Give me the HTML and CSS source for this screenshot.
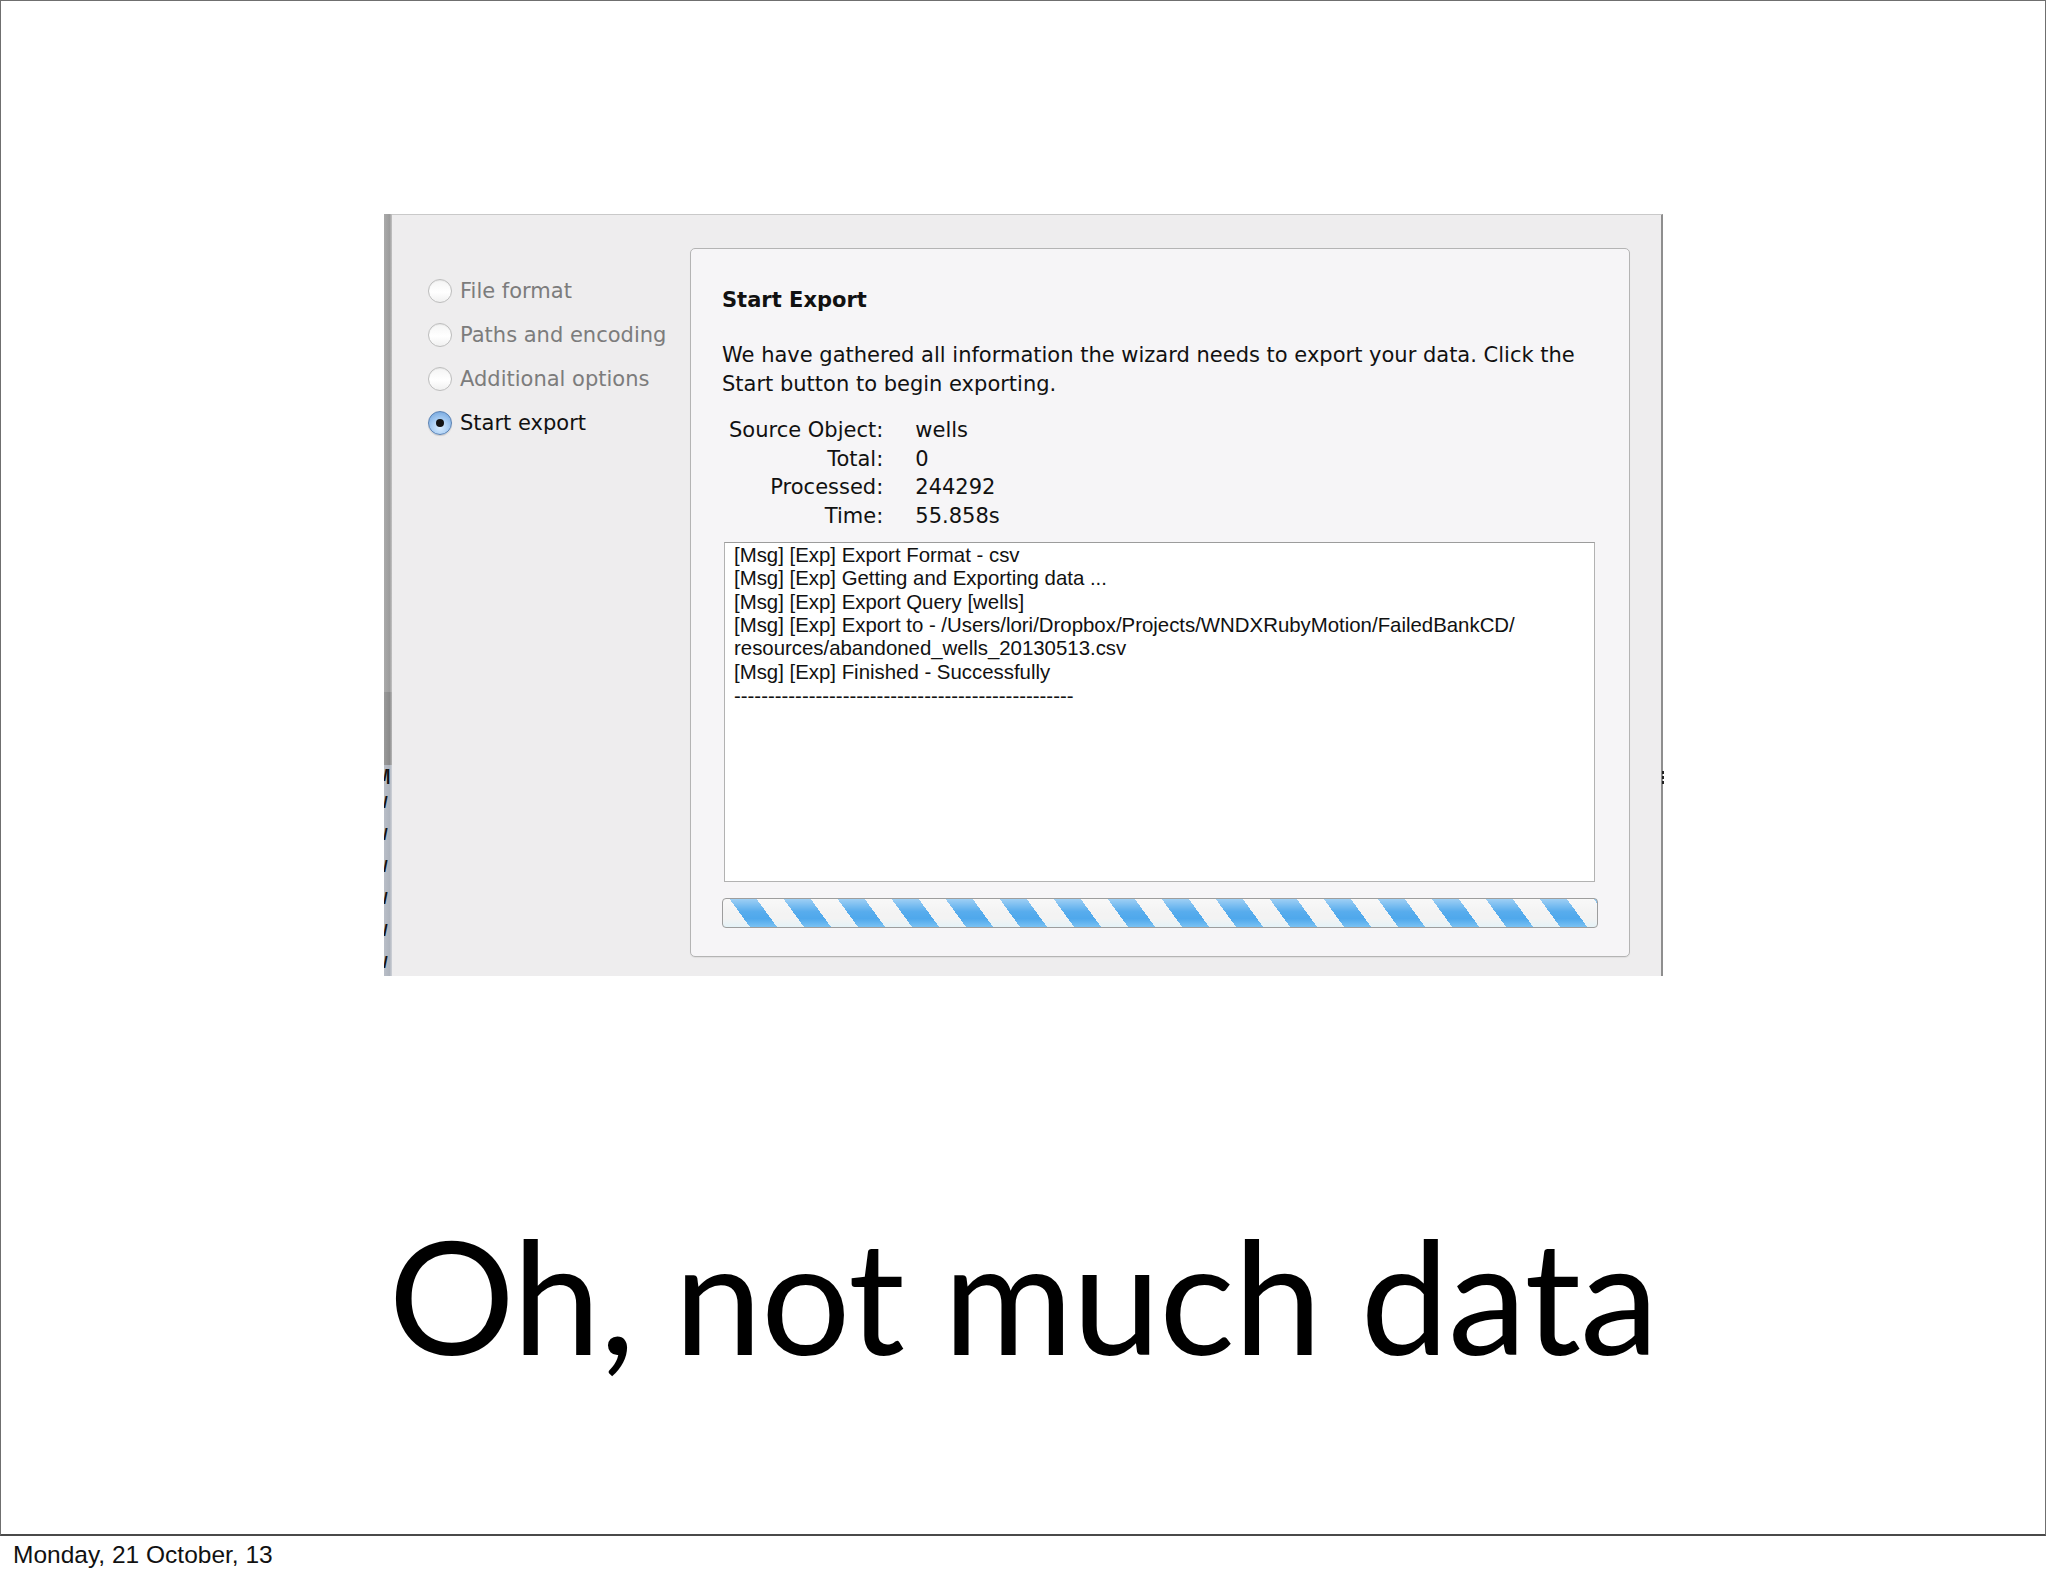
FILE: index.html
```html
<!DOCTYPE html>
<html>
<head>
<meta charset="utf-8">
<title>Oh, not much data</title>
<link rel="stylesheet" href="styles.css">
</head>
<body>
<div class="slide">
  <div class="shot">
    <div class="frame-left">
      <div class="fl-top"></div>
      <div class="fl-mid"></div>
      <div class="fl-bottom">
        <span class="sl first">/|</span>
        <span class="sl">/</span>
        <span class="sl">/</span>
        <span class="sl">/</span>
        <span class="sl">/</span>
        <span class="sl">/</span>
        <span class="sl">/</span>
      </div>
    </div>
    <div class="win">
      <div class="steps">
        <div class="step off"><span class="radio"></span><span class="lbl">File format</span></div>
        <div class="step off"><span class="radio"></span><span class="lbl">Paths and encoding</span></div>
        <div class="step off"><span class="radio"></span><span class="lbl">Additional options</span></div>
        <div class="step on"><span class="radio sel"><span class="dot"></span></span><span class="lbl">Start export</span></div>
      </div>
      <div class="panel">
        <h2 class="heading">Start Export</h2>
        <p class="intro">We have gathered all information the wizard needs to export your data. Click the<br>Start button to begin exporting.</p>
        <div class="info">
          <span class="k">Source Object:</span><span class="v">wells</span>
          <span class="k">Total:</span><span class="v">0</span>
          <span class="k">Processed:</span><span class="v">244292</span>
          <span class="k">Time:</span><span class="v">55.858s</span>
        </div>
        <div class="log">
          <div>[Msg] [Exp] Export Format - csv</div>
          <div>[Msg] [Exp] Getting and Exporting data ...</div>
          <div>[Msg] [Exp] Export Query [wells]</div>
          <div>[Msg] [Exp] Export to - /Users/lori/Dropbox/Projects/WNDXRubyMotion/FailedBankCD/</div>
          <div>resources/abandoned_wells_20130513.csv</div>
          <div>[Msg] [Exp] Finished - Successfully</div>
          <div class="dashes">--------------------------------------------------</div>
        </div>
        <div class="bar"></div>
      </div>
    </div>
  </div>
  <h1 class="title">Oh, not much data</h1>
</div>
<div class="date">Monday, 21 October, 13</div>
</body>
</html>
```

FILE: styles.css
```css
html, body {
  margin: 0;
  padding: 0;
  background: #ffffff;
}

.slide {
  box-sizing: border-box;
  width: 2046px;
  height: 1536px;
  border: 1px solid #6f6f6f;
  border-bottom: 2px solid #4a4a4a;
  padding-top: 213px;
  padding-left: 383px;
}

.shot {
  display: flex;
  width: 1279px;
  height: 762px;
}

.frame-left {
  width: 8px;
  display: flex;
  flex-direction: column;
}

.fl-top {
  height: 478px;
  background: linear-gradient(to right, #aaaaaa, #9c9c9c 70%, #c4c4c4);
}

.fl-mid {
  height: 73px;
  background: linear-gradient(to right, #9a9a9a, #8a8a8a 70%, #b8b8b8);
}

.fl-bottom {
  flex: 1;
  background: linear-gradient(to right, #b9bec7, #aeb4be 70%, #cfd2d8);
  display: flex;
  flex-direction: column;
  overflow: hidden;
}

.sl {
  font-family: "Liberation Sans", Arial, sans-serif;
  font-weight: bold;
  font-size: 17px;
  line-height: 32px;
  height: 32px;
  color: #111111;
  margin-left: -1px;
  letter-spacing: -2px;
}

.sl.first {
  line-height: 22px;
  height: 27px;
}

.win {
  position: relative;
  flex: 1;
  display: flex;
  background: #eeedee;
  border-top: 1px solid #c9c9c9;
  border-right: 2px solid #8e8e8e;
}

.win::after {
  content: "";
  position: absolute;
  right: -3px;
  top: 556px;
  width: 2px;
  height: 14px;
  background: repeating-linear-gradient(to bottom, #222 0 3px, transparent 3px 5px);
}

.steps {
  box-sizing: border-box;
  width: 298px;
  padding-top: 54px;
  padding-left: 36px;
  display: flex;
  flex-direction: column;
}

.step {
  height: 44px;
  display: flex;
  align-items: center;
  gap: 8px;
  font-family: "DejaVu Sans", Verdana, sans-serif;
  font-size: 21px;
}

.step.off .lbl {
  color: #7c7c7c;
}

.step.on .lbl {
  color: #111111;
}

.radio {
  box-sizing: border-box;
  width: 24px;
  height: 24px;
  border-radius: 50%;
  border: 1px solid #bdbdbd;
  background: linear-gradient(to bottom, #f4f4f4, #ffffff 55%, #f0f0f0);
  box-shadow: inset 0 1px 1px rgba(0,0,0,0.06);
  display: flex;
  align-items: center;
  justify-content: center;
  flex: none;
}

.radio.sel {
  border: 1px solid #5a82b4;
  background: radial-gradient(circle at 50% 70%, #d8ecff 0%, #a9cdf3 45%, #7faee2 80%, #8fb8e6 100%);
  box-shadow: 0 1px 1px rgba(0,0,0,0.15);
}

.dot {
  width: 8px;
  height: 8px;
  border-radius: 50%;
  background: #141414;
}

.panel {
  box-sizing: border-box;
  width: 940px;
  height: 709px;
  margin-top: 33px;
  padding: 37px 31px 0 31px;
  background: #f6f5f7;
  border: 1px solid #b4b4b4;
  border-radius: 5px;
  box-shadow: 0 1px 1px rgba(0,0,0,0.06);
  font-family: "DejaVu Sans", Verdana, sans-serif;
  font-size: 21px;
  color: #111111;
}

.heading {
  margin: 0;
  font-size: 21px;
  font-weight: bold;
  line-height: 28px;
}

.intro {
  margin: 27px 0 0 0;
  line-height: 29px;
}

.info {
  display: grid;
  grid-template-columns: auto 1fr;
  column-gap: 32px;
  margin: 17px 0 0 7px;
  line-height: 28.7px;
}

.info .k {
  text-align: right;
}

.log {
  box-sizing: border-box;
  width: 871px;
  height: 340px;
  margin: 11px 0 0 2px;
  padding: 1px 9px 0 9px;
  background: #ffffff;
  border: 1px solid #b2b2b2;
  border-top-color: #9c9c9c;
  font-family: "Liberation Sans", Arial, Helvetica, sans-serif;
  font-size: 20.4px;
  line-height: 23.4px;
  color: #111111;
  overflow: hidden;
}

.log .dashes {
  line-height: 24px;
}

.bar {
  box-sizing: border-box;
  width: 876px;
  height: 30px;
  margin-top: 16px;
  border: 1px solid #9d9d9d;
  border-radius: 4px;
  background:
    linear-gradient(to bottom, rgba(255,255,255,0.45) 0%, rgba(255,255,255,0.05) 45%, rgba(255,255,255,0) 70%, rgba(200,240,255,0.35) 100%),
    repeating-linear-gradient(54deg, #f3f3f3 0 21.8px, #4fa8ec 21.8px 43.7px);
}

.title {
  margin: 239px 0 0 -383px;
  text-align: center;
  font-family: Lato, "Open Sans", sans-serif;
  font-weight: normal;
  font-size: 158px;
  line-height: 158px;
  color: #000000;
  letter-spacing: -1px;
}

.date {
  margin: 5px 0 0 13px;
  font-family: "Liberation Sans", Arial, Helvetica, sans-serif;
  font-size: 24.5px;
  line-height: 28px;
  color: #111111;
}
```
